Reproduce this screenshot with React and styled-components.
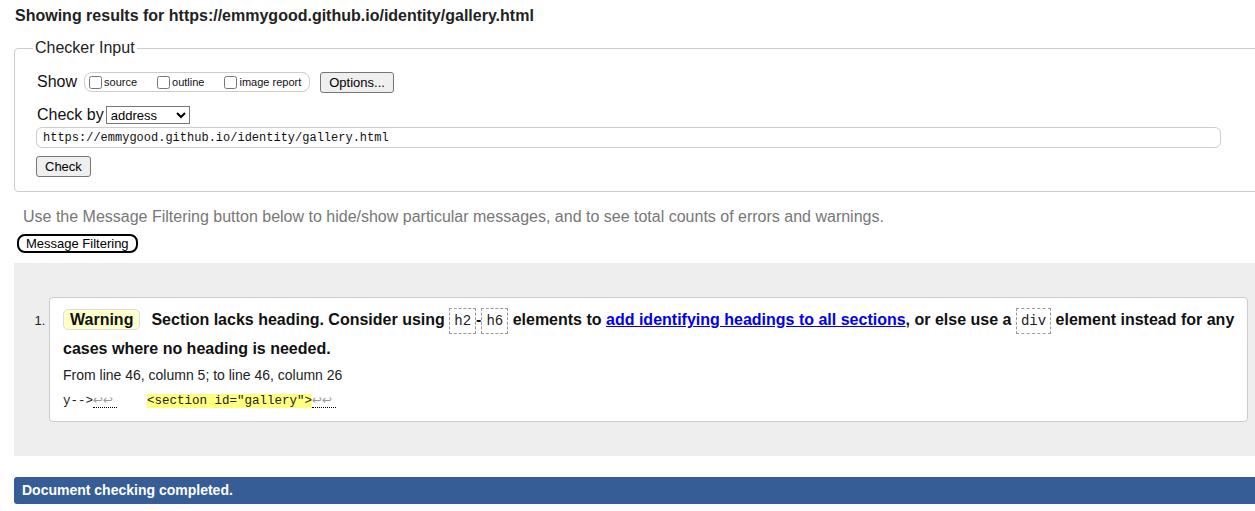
import React from "react";
import styled, { createGlobalStyle } from "styled-components";

const GlobalStyle = createGlobalStyle`
  html, body {
    margin: 0;
    padding: 0;
    background: #fff;
    overflow: hidden;
  }
  body {
    font-family: "Liberation Sans", Arial, sans-serif;
    color: #111;
  }
`;

const Page = styled.div`
  margin-left: 14px;
  width: 1248px;
`;

const Title = styled.h2`
  margin: 7px 0 0 1px;
  font-size: 16px;
  line-height: 18px;
  font-weight: bold;
  color: #222;
`;

const Fieldset = styled.fieldset`
  margin: 14px 0 0 0;
  padding: 0 0 14px 22px;
  border: 1px solid #ccc;
  border-radius: 4px;
`;

const Legend = styled.legend`
  margin-left: -4px;
  padding: 0 2px;
  font-size: 16px;
  line-height: 18px;
  color: #222;
`;

const Row = styled.div`
  display: flex;
  align-items: center;
  height: ${(p) => p.$h || 22}px;
  margin-top: ${(p) => p.$mt || 0}px;
  font-size: 16px;
`;

const Label = styled.span`
  margin-right: ${(p) => p.$mr || 6}px;
`;

const OptionGroup = styled.span`
  display: flex;
  align-items: center;
  height: 18px;
  padding: 0 8px 0 2px;
  border: 1px solid #ccc;
  border-radius: 8px;
  font-size: 11px;
`;

const Option = styled.label`
  display: flex;
  align-items: center;
  margin-right: ${(p) => p.$mr || 0}px;
  input {
    margin: 0 2px 0 2px;
    width: 13px;
    height: 13px;
  }
`;

const Button = styled.button`
  font-family: "Liberation Sans", Arial, sans-serif;
  font-size: 13px;
  height: 21px;
  padding: 0 ${(p) => p.$px || 8}px;
  margin-left: ${(p) => p.$ml || 0}px;
  background: #efefef;
  color: #000;
  border: 1px solid #767676;
  border-radius: 3px;
`;

const Select = styled.select`
  width: 84px;
  height: 18px;
  font-family: "Liberation Sans", Arial, sans-serif;
  font-size: 13px;
  padding: 0;
  border: 1px solid #767676;
  border-radius: 0;
  background: #fff;
  color: #000;
`;

const UrlInput = styled.input`
  display: block;
  box-sizing: border-box;
  width: 1185px;
  height: 21px;
  margin: 2px 0 0 -1px;
  padding: 0 6px;
  font-family: "Liberation Mono", "DejaVu Sans Mono", monospace;
  font-size: 12px;
  color: #111;
  border: 1px solid #ccc;
  border-radius: 6px;
  outline: none;
`;

const CheckRow = styled.div`
  margin-top: 8px;
  margin-left: -1px;
`;

const Hint = styled.p`
  margin: 15px 0 0 9px;
  font-size: 16px;
  line-height: 19px;
  color: #777;
`;

const FilterButton = styled.button`
  display: block;
  margin: 8px 0 0 3px;
  height: 19px;
  padding: 0 7px;
  font-family: "Liberation Sans", Arial, sans-serif;
  font-size: 13px;
  background: #fff;
  color: #000;
  border: 2px solid #000;
  border-radius: 8px;
`;

const Results = styled.ol`
  margin: 10px 0 0 0;
  padding: 34px 14px 34px 35px;
  background: #eee;
  list-style: decimal;
`;

const Message = styled.li`
  background: #fff;
  border: 1px solid #ccc;
  border-radius: 4px;
  padding: 8px 8px 11px 13px;
  color: #111;
  &::marker {
    font-size: 13px;
    color: #222;
  }
`;

const MessageText = styled.p`
  margin: 0;
  font-size: 16px;
  line-height: 28px;
  font-weight: bold;
`;

const Badge = styled.strong`
  display: inline-block;
  line-height: 19px;
  padding: 0 6px;
  margin-right: 11px;
  background: #ffffcc;
  border: 1px solid #ddd;
  border-radius: 5px;
`;

const Code = styled.code`
  font-family: "Liberation Mono", "DejaVu Sans Mono", monospace;
  font-weight: normal;
  font-size: 14px;
  padding: 4px 4px;
  border: 1px dashed #999;
  color: #222;
`;

const Link = styled.a`
  color: #00e;
  text-decoration: underline;
`;

const Location = styled.p`
  margin: 3px 0 0 0;
  font-size: 14px;
  line-height: 18px;
  color: #222;
`;

const Extract = styled.p`
  margin: 8px 0 0 0;
  height: 18px;
  font-family: "Liberation Mono", "DejaVu Sans Mono", monospace;
  font-size: 12.5px;
  line-height: 18px;
  white-space: pre;
  color: #222;
`;

const Lf = styled.span`
  display: inline-block;
  width: 24px;
  line-height: 14px;
  font-family: "DejaVu Sans", "Liberation Sans", sans-serif;
  font-size: 12px;
  color: #999;
  border-bottom: 1px dotted #000;
`;

const Mark = styled.mark`
  background: #ffff80;
  color: #222;
`;

const Done = styled.p`
  margin: 21px 0 0 0;
  height: 27px;
  line-height: 27px;
  padding-left: 8px;
  background: #365d95;
  border-radius: 3px 0 0 3px;
  color: #fff;
  font-size: 14px;
  font-weight: bold;
`;

export default function App() {
  return (
    <>
      <GlobalStyle />
      <Page>
        <Title>Showing results for https://emmygood.github.io/identity/gallery.html</Title>
        <Fieldset>
          <Legend>Checker Input</Legend>
          <Row $mt={14}>
            <Label $mr={7}>Show</Label>
            <OptionGroup>
              <Option $mr={18}><input type="checkbox" />source</Option>
              <Option $mr={18}><input type="checkbox" />outline</Option>
              <Option><input type="checkbox" />image report</Option>
            </OptionGroup>
            <Button $ml={10} $px={8}>Options...</Button>
          </Row>
          <Row $mt={12} $h={20}>
            <Label $mr={2}>Check by</Label>
            <Select defaultValue="address">
              <option value="address">address</option>
              <option value="file">file upload</option>
              <option value="text">text input</option>
            </Select>
          </Row>
          <UrlInput defaultValue="https://emmygood.github.io/identity/gallery.html" />
          <CheckRow>
            <Button $px={8}>Check</Button>
          </CheckRow>
        </Fieldset>
        <Hint>
          Use the Message Filtering button below to hide/show particular messages, and to see total counts of errors and warnings.
        </Hint>
        <FilterButton>Message Filtering</FilterButton>
        <Results>
          <Message>
            <MessageText>
              <Badge>Warning</Badge>
              Section lacks heading. Consider using <Code>h2</Code>-<Code>h6</Code> elements to{" "}
              <Link href="#">add identifying headings to all sections</Link>, or else use a <Code>div</Code> element
              instead for any cases where no heading is needed.
            </MessageText>
            <Location>From line 46, column 5; to line 46, column 26</Location>
            <Extract>
              y--&gt;<Lf>↩↩</Lf>{"    "}<Mark>&lt;section id="gallery"&gt;</Mark><Lf>↩↩</Lf>
            </Extract>
          </Message>
        </Results>
        <Done>Document checking completed.</Done>
      </Page>
    </>
  );
}
